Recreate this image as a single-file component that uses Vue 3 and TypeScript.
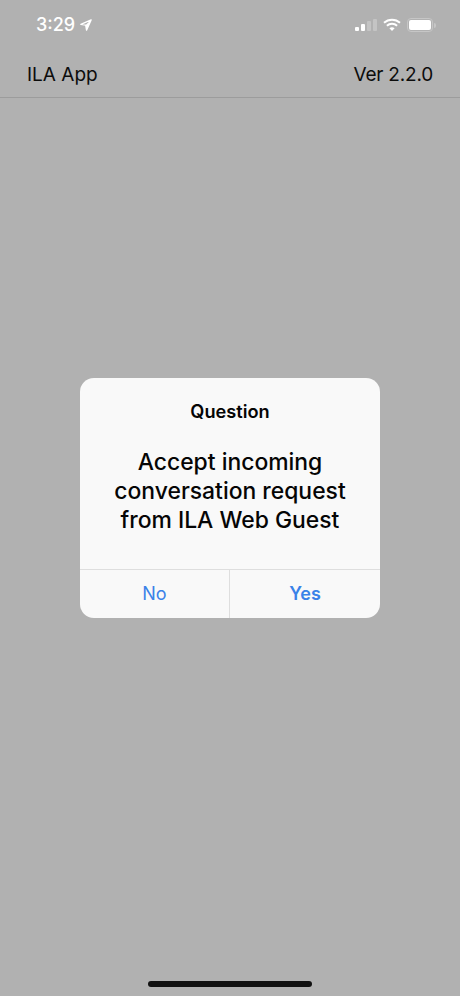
<script setup lang="ts">
const signalBars: { h: number; on: boolean }[] = [
  { h: 4, on: true },
  { h: 7, on: true },
  { h: 10, on: false },
  { h: 12, on: false },
]
</script>

<template>
  <div class="screen">
    <header class="top">
      <div class="status">
        <div class="status-left">
          <span class="time">3:29</span>
          <svg class="loc" width="12" height="12" viewBox="0 0 11 11">
            <path d="M10.2 0.8 L0.8 5 L5.2 5.6 L6 10.2 Z" fill="none" stroke="#fff" stroke-width="1.2" stroke-linejoin="round" />
            <path d="M10.2 0.8 L5.2 5.6 L6 10.2 Z" fill="#fff" />
          </svg>
        </div>
        <div class="status-right">
          <div class="signal">
            <span v-for="(b, i) in signalBars" :key="i" class="bar" :class="{ on: b.on }" :style="{ height: b.h + 'px' }"></span>
          </div>
          <svg class="wifi" width="18" height="14" viewBox="0 0 18 14">
            <path d="M1 4.8 C5.5 0.6 12.5 0.6 17 4.8" fill="none" stroke="#fff" stroke-width="2" />
            <path d="M3.9 7.8 C6.8 5.2 11.2 5.2 14.1 7.8" fill="none" stroke="#fff" stroke-width="2" />
            <path d="M6.4 10.2 C8 9 10 9 11.6 10.2 L9 13 Z" fill="#fff" />
          </svg>
          <div class="battery">
            <div class="cell"><div class="level"></div></div>
            <div class="nub"></div>
          </div>
        </div>
      </div>
      <nav class="nav">
        <span>ILA App</span>
        <span class="version">Ver 2.2.0</span>
      </nav>
    </header>

    <div class="overlay">
      <div class="dialog">
        <div class="body">
          <div class="title">Question</div>
          <div class="message">Accept incoming<br />conversation request<br />from ILA Web Guest</div>
        </div>
        <div class="actions">
          <button class="action first" type="button">No</button>
          <button class="action primary" type="button">Yes</button>
        </div>
      </div>
    </div>

    <div class="home"></div>
  </div>
</template>

<style scoped>
.screen {
  position: relative;
  width: 460px;
  height: 996px;
  background: #b1b1b1;
  font-family: Inter, "Liberation Sans", sans-serif;
  overflow: hidden;
  display: flex;
  flex-direction: column;
}
.top {
  height: 98px;
  box-sizing: border-box;
  border-bottom: 1px solid #9c9c9c;
  display: flex;
  flex-direction: column;
}
.status {
  height: 51px;
  display: flex;
  justify-content: space-between;
  align-items: flex-start;
  padding: 15px 24px 0 36px;
  box-sizing: border-box;
}
.status-left {
  display: flex;
  align-items: center;
  gap: 5px;
}
.time {
  color: #fff;
  font-size: 18px;
  font-weight: 500;
  line-height: 20px;
}
.status-right {
  display: flex;
  align-items: center;
  gap: 6px;
  height: 20px;
}
.signal {
  display: flex;
  align-items: flex-end;
  gap: 2px;
  height: 12px;
}
.bar {
  width: 4px;
  border-radius: 1px;
  background: #c4c4c4;
}
.bar.on {
  background: #fff;
}
.battery {
  display: flex;
  align-items: center;
  gap: 1px;
}
.cell {
  width: 26px;
  height: 14px;
  box-sizing: border-box;
  border: 1px solid #c6c6c6;
  border-radius: 4px;
  padding: 1px;
}
.level {
  height: 100%;
  background: #fff;
  border-radius: 2px;
}
.nub {
  width: 2px;
  height: 5px;
  background: #c6c6c6;
  border-radius: 0 2px 2px 0;
}
.nav {
  flex: 1;
  display: flex;
  justify-content: space-between;
  align-items: flex-start;
  padding: 12px 27px 0;
  font-size: 19px;
  line-height: 24px;
  color: #0c0c0c;
}
.version {
  letter-spacing: -0.2px;
}
.overlay {
  position: absolute;
  inset: 0;
  display: flex;
  align-items: center;
  justify-content: center;
}
.dialog {
  width: 300px;
  height: 240px;
  background: #f9f9f9;
  border-radius: 14px;
  display: flex;
  flex-direction: column;
  overflow: hidden;
}
.body {
  flex: 1;
  display: flex;
  flex-direction: column;
  align-items: center;
  text-align: center;
  padding-top: 22px;
}
.title {
  font-size: 18.2px;
  font-weight: 600;
  line-height: 22px;
  color: #050505;
}
.message {
  margin-top: 26px;
  font-size: 22.9px;
  font-weight: 450;
  line-height: 29px;
  color: #050505;
}
.actions {
  height: 48px;
  border-top: 1px solid #dedede;
  display: grid;
  grid-template-columns: 150px 150px;
}
.action {
  border: 0;
  background: transparent;
  font: inherit;
  font-size: 18px;
  color: #3b82e8;
  padding: 0 0 2px;
}
.action.first {
  border-right: 1px solid #dedede;
}
.action.primary {
  font-weight: 600;
}
.home {
  position: absolute;
  left: 148px;
  bottom: 9px;
  width: 164px;
  height: 6px;
  border-radius: 3px;
  background: #111;
}
</style>
